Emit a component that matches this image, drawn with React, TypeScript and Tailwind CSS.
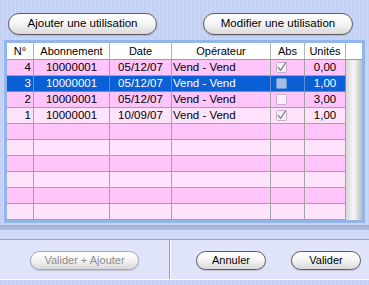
import React from 'react';

type Usage = {
  n: number;
  abonnement: string;
  date: string;
  operateur: string;
  abs: boolean;
  unites: string;
  selected?: boolean;
};

const usages: Usage[] = [
  { n: 4, abonnement: '10000001', date: '05/12/07', operateur: 'Vend - Vend', abs: true, unites: '0,00' },
  { n: 3, abonnement: '10000001', date: '05/12/07', operateur: 'Vend - Vend', abs: false, unites: '1,00', selected: true },
  { n: 2, abonnement: '10000001', date: '05/12/07', operateur: 'Vend - Vend', abs: false, unites: '3,00' },
  { n: 1, abonnement: '10000001', date: '10/09/07', operateur: 'Vend - Vend', abs: true, unites: '1,00' },
];

function AquaButton({ label, className = '', disabled = false }: { label: string; className?: string; disabled?: boolean }) {
  return (
    <button
      className={`flex items-center justify-center rounded-full border bg-gradient-to-b from-white via-[#f4f4f4] to-[#d9d9d9] shadow-[0_1px_1px_rgba(0,0,0,0.15)] leading-none ${
        disabled ? 'border-[#a4a8b4] text-[#8c8c8c]' : 'border-[#5e5e5e] text-black'
      } ${className}`}
    >
      {label}
    </button>
  );
}

function Check({ checked, selected, light }: { checked: boolean; selected?: boolean; light?: boolean }) {
  const fill = selected ? '#a3bde8' : light ? '#f8f0f8' : '#fbeefa';
  const stroke = selected ? '#7298d2' : '#c2b2c4';
  return (
    <svg width="11" height="11" viewBox="0 0 11 11" className="ml-[5px]">
      <rect x="0.5" y="0.5" width="10" height="10" rx="1" fill={fill} stroke={stroke} />
      {checked && (
        <path d="M2.2 5.4 L4.6 8.3 L9.6 0.8" fill="none" stroke="#8e7f94" strokeWidth="1.3" strokeLinecap="round" strokeLinejoin="round" />
      )}
    </svg>
  );
}

const cols = ['w-[27px]', 'w-[76px]', 'w-[62px]', 'w-[99px]', 'w-[34px]', 'w-[41px]'];

function BodyRow({ row, index }: { row?: Usage; index: number }) {
  const bg = row?.selected ? 'bg-[#0c60d6] text-white' : index % 2 === 0 ? 'bg-[#ffc5fa]' : 'bg-[#ffe3fd]';
  const line = row?.selected ? 'border-[#5f8fd8]' : 'border-[#a3a3a3]';
  return (
    <div className="flex h-[16px] text-[11.5px]">
      <div className={`flex ${bg}`}>
        <div className={`${cols[0]} border-r border-b ${line} text-right pr-[2px] leading-[15px]`}>{row?.n}</div>
        <div className={`${cols[1]} border-r border-b ${line} text-center leading-[15px]`}>{row?.abonnement}</div>
        <div className={`${cols[2]} border-r border-b ${line} text-center leading-[15px]`}>{row?.date}</div>
        <div className={`${cols[3]} border-r border-b ${line} pl-[1px] leading-[15px]`}>{row?.operateur}</div>
        <div className={`${cols[4]} border-r border-b ${line} flex items-center`}>
          {row && <Check checked={row.abs} selected={row.selected} light={index % 2 === 1} />}
        </div>
        <div className={`${cols[5]} border-r border-b ${line} text-center leading-[15px]`}>{row?.unites}</div>
      </div>
      <div className="w-[16px] bg-gradient-to-r from-[#d6d6d6] via-[#f8f8f8] to-[#bcbcbc]" />
    </div>
  );
}

export default function App() {
  const rows = Array.from({ length: 10 }, (_, i) => usages[i]);
  return (
    <div className="w-[369px] h-[285px] overflow-hidden flex flex-col font-['Liberation_Sans',Arial,sans-serif] text-[11px] text-black bg-[#c7d3f3] bg-[repeating-linear-gradient(90deg,#c5d1f2_0px,#c5d1f2_3px,#cdd8f6_3px,#cdd8f6_4px)]">
      {/* Top actions */}
      <div className="flex justify-between pl-[8px] pr-[16px] pt-[13px] h-[40px]">
        <AquaButton label="Ajouter une utilisation" className="w-[149px] h-[22px] text-[11.5px]" />
        <AquaButton label="Modifier une utilisation" className="w-[150px] h-[22px] text-[11.5px]" />
      </div>

      {/* Table */}
      <div className="ml-[4px] w-[361px] h-[183px] border-[3px] border-[#93b6ea] bg-white">
        <div className="flex h-[17px] bg-white border-b border-[#9c9c9c]">
          {['N°', 'Abonnement', 'Date', 'Opérateur', 'Abs', 'Unités'].map((h, i) => (
            <div key={h} className={`${cols[i]} border-r border-[#b4b4b4] text-center leading-[16px]`}>
              {h}
            </div>
          ))}
          <div className="w-[16px] bg-white" />
        </div>
        {rows.map((r, i) => (
          <BodyRow key={i} row={r} index={i} />
        ))}
      </div>

      {/* Separator bands */}
      <div className="h-[2px]" />
      <div className="h-[5px] bg-gradient-to-b from-[#a3aed0] to-[#b3bede]" />
      <div className="h-[9px] bg-[#cfd9f6]" />
      <div className="h-[1px] bg-[#98a1bd]" />

      {/* Bottom toolbar */}
      <div className="h-[39px] flex bg-[#dfe4fb]">
        <div className="w-[169px] pl-[30px] pt-[11px]">
          <AquaButton label="Valider + Ajouter" className="w-[109px] h-[19px]" disabled />
        </div>
        <div className="w-[1px] bg-[#9a9ca6]" />
        <div className="w-[1px] bg-white" />
        <div className="flex-1 flex gap-[25px] pl-[25px] pt-[11px]">
          <AquaButton label="Annuler" className="w-[70px] h-[19px]" />
          <AquaButton label="Valider" className="w-[70px] h-[19px]" />
        </div>
      </div>
      <div className="h-[1px] bg-white" />
      <div className="flex-1" />
    </div>
  );
}
